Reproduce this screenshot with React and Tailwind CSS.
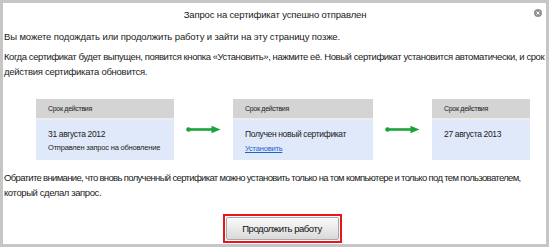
import React from "react";

function Arrow() {
  return (
    <svg width="35" height="9" viewBox="0 0 35 9" className="shrink-0">
      <circle cx="2.5" cy="4.5" r="2.3" fill="#1ba33c" />
      <line x1="2.5" y1="4.5" x2="27" y2="4.5" stroke="#1ba33c" strokeWidth="2.6" />
      <polygon points="25.5,0.8 34.5,4.5 25.5,8.2" fill="#1ba33c" />
    </svg>
  );
}

function Box({ w, children }) {
  return (
    <div className={`${w} shrink-0`}>
      <div className="h-[19px] bg-[#d4d4d4] pl-[12px] flex items-center text-[7px] tracking-[-0.3px] text-[#222]">
        Срок действия
      </div>
      <div className="h-[2px] bg-[#ececec]" />
      <div className="h-[40px] bg-[#dfe9fa] pl-[12px] pt-[8px] text-[#222] leading-[13px]">
        {children}
      </div>
    </div>
  );
}

export default function App() {
  return (
    <div className="w-[550px] h-[247px] bg-white" style={{ fontFamily: "'Liberation Sans', Arial, sans-serif" }}>
      <div className="relative h-[247px] w-[549px] border-[3px] border-[#c6c6c6] text-[9.5px] leading-[15px] text-[#1a1a1a] pl-[1px]">
        <div className="h-[22px] flex items-center justify-center tracking-[-0.15px]">
          Запрос на сертификат успешно отправлен
        </div>
        <div className="absolute right-[4px] top-[6px] w-[8px] h-[8px] rounded-full bg-[#929292] flex items-center justify-center">
          <svg width="4" height="4" viewBox="0 0 4 4">
            <path d="M0.5 0.5 L3.5 3.5 M3.5 0.5 L0.5 3.5" stroke="#fff" strokeWidth="1" />
          </svg>
        </div>
        <p className="mt-[4px] whitespace-nowrap tracking-[-0.12px]">Вы можете подождать или продолжить работу и зайти на эту страницу позже.</p>
        <div className="mt-[5px] whitespace-nowrap">
          <div className="tracking-[-0.42px]">
            Когда сертификат будет выпущен, появится кнопка «Установить», нажмите её. Новый сертификат установится автоматически, и срок
          </div>
          <div className="tracking-[-0.26px]">действия сертификата обновится.</div>
        </div>
        <div className="mt-[20px] flex items-center pl-[32px]">
          <Box w="w-[138px]">
            <div className="text-[8.5px] tracking-[-0.35px] whitespace-nowrap">31 августа 2012</div>
            <div className="text-[7.5px] tracking-[-0.2px] whitespace-nowrap">Отправлен запрос на обновление</div>
          </Box>
          <div className="w-[59px] flex justify-center"><Arrow /></div>
          <Box w="w-[140px]">
            <div className="text-[8.5px] tracking-[-0.35px] whitespace-nowrap">Получен новый сертификат</div>
            <a href="#" className="text-[7.5px] tracking-[-0.2px] text-[#1f63c9] underline">Установить</a>
          </Box>
          <div className="w-[59px] flex justify-center"><Arrow /></div>
          <Box w="w-[98px]">
            <div className="text-[8.5px] tracking-[-0.35px] whitespace-nowrap">27 августа 2013</div>
          </Box>
        </div>
        <div className="mt-[10px] whitespace-nowrap">
          <div className="tracking-[-0.66px]">
            Обратите внимание, что вновь полученный сертификат можно установить только на том компьютере и только под тем пользователем,
          </div>
          <div className="tracking-[-0.4px]">который сделал запрос.</div>
        </div>
        <div className="flex justify-center mt-[14px] pl-[14px]">
          <div className="border-2 border-[#e8141e] p-[1px]">
            <button className="w-[113px] h-[23px] border border-[#a9a9a9] rounded-[2px] bg-gradient-to-b from-[#fbfbfb] to-[#d9d9d9] text-[9.5px] tracking-[-0.45px] text-[#111] whitespace-nowrap">
              Продолжить работу
            </button>
          </div>
        </div>
      </div>
    </div>
  );
}
